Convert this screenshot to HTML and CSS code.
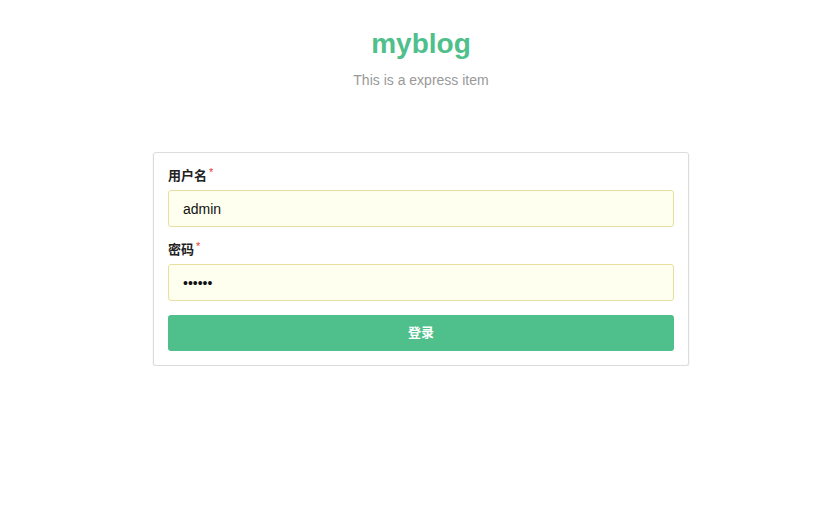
FILE: index.html
```html
<!DOCTYPE html>
<html lang="zh-CN">
<head>
<meta charset="utf-8">
<title>myblog</title>
<link rel="stylesheet" href="styles.css">
</head>
<body>
<header class="header">
  <h1 class="title">myblog</h1>
  <p class="subtitle">This is a express item</p>
</header>
<main class="card">
  <form class="form">
    <div class="field">
      <label class="label">用户名<span class="req">*</span></label>
      <input class="input" type="text" value="admin">
    </div>
    <div class="field">
      <label class="label">密码<span class="req">*</span></label>
      <input class="input" type="password" value="123456">
    </div>
    <button class="btn" type="button">登录</button>
  </form>
</main>
</body>
</html>
```
FILE: styles.css
```css
html, body {
  margin: 0;
  background: #ffffff;
}
body {
  padding-left: 17px;
  font-family: "Liberation Sans", Arial, "Noto Sans CJK SC", sans-serif;
  color: #333;
}
.header {
  text-align: center;
  padding-top: 24px;
}
.title {
  margin: 0;
  font-size: 28px;
  line-height: 40px;
  font-weight: bold;
  color: #4fbf8b;
}
.subtitle {
  margin: 6px 0 0;
  font-size: 14px;
  line-height: 20px;
  color: #999999;
}
.card {
  box-sizing: border-box;
  width: 536px;
  margin: 62px auto 0;
  padding: 14px;
  border: 1px solid #dcdcdc;
  border-radius: 3px;
  background: #fff;
  box-shadow: 0 1px 2px rgba(0, 0, 0, 0.1);
}
.form {
  display: flex;
  flex-direction: column;
  gap: 14px;
}
.field {
  display: flex;
  flex-direction: column;
  gap: 5px;
}
.label {
  display: flex;
  align-items: flex-start;
  height: 18px;
  font-size: 13px;
  line-height: 18px;
  font-weight: bold;
  color: #222;
}
.req {
  color: #e53935;
  font-size: 11px;
  line-height: 11px;
  font-weight: normal;
  margin-left: 2px;
}
.input {
  box-sizing: border-box;
  display: block;
  width: 100%;
  height: 37px;
  margin: 0;
  padding: 0 14px;
  border: 1px solid #e6df9f;
  border-radius: 3px;
  background: #fffff0;
  font-family: "Liberation Sans", Arial, sans-serif;
  font-size: 14px;
  color: #111;
  outline: none;
}
.btn {
  box-sizing: border-box;
  display: block;
  width: 100%;
  height: 36px;
  margin: 0;
  padding: 0 0 4px;
  border: none;
  border-radius: 3px;
  background: #4fbf8b;
  color: #fff;
  font-family: "Liberation Sans", Arial, "Noto Sans CJK SC", sans-serif;
  font-size: 13px;
  font-weight: bold;
  cursor: pointer;
}
```
